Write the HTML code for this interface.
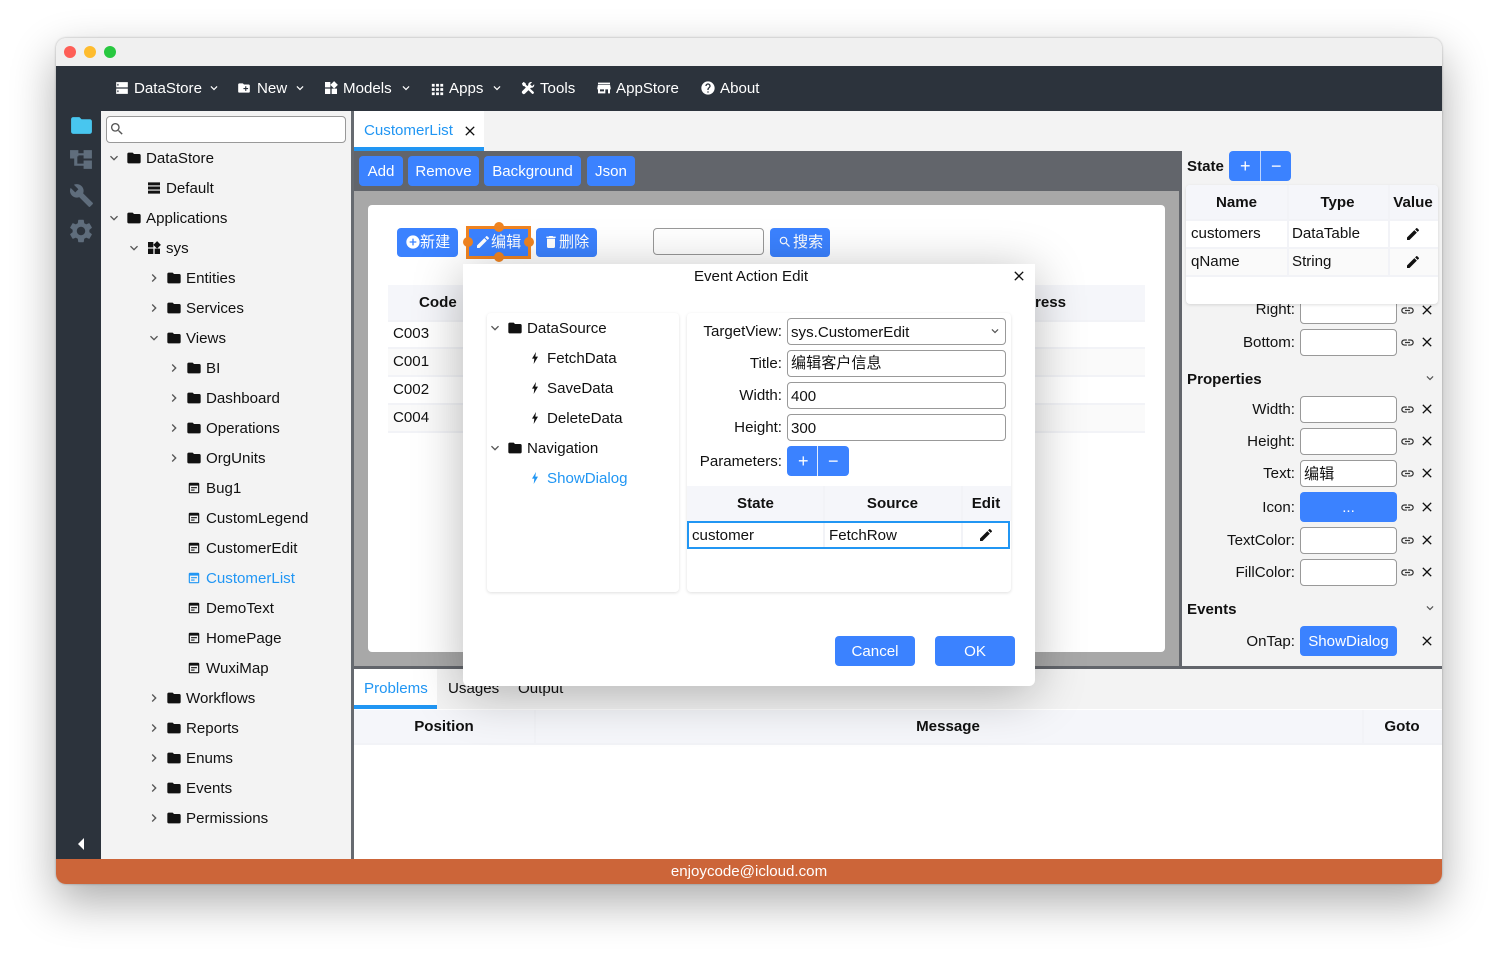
<!DOCTYPE html>
<html><head><meta charset="utf-8"><style>
*{box-sizing:border-box}
html,body{margin:0;padding:0;width:1498px;height:958px;overflow:hidden;background:#fff;font-family:"Liberation Sans","Noto Sans CJK SC",sans-serif;font-size:15.1px;color:#111}
div,span,svg{position:absolute}
.t{white-space:nowrap;line-height:20px;height:20px;margin-top:1px}
.r{white-space:nowrap;line-height:20px;height:20px;text-align:right;width:130px;margin-top:1px}
.c{white-space:nowrap;line-height:20px;height:20px;text-align:center;margin-top:1px}
.b{font-weight:bold}
.w{color:#fff}
.bl{color:#2196f3}
svg{fill:currentColor;overflow:visible}
.i16{width:16px;height:16px}
.i14{width:14px;height:14px}
.lk{width:15px;height:15px;margin:-.5px;color:#333}
.xx{width:16px;height:16px;margin:-1px}
.g{color:#555}
.btn{background:#3b82ff;border-radius:4px;color:#fff;text-align:center;line-height:30px;height:30px;white-space:nowrap;padding-top:1px}
.in{background:#fff;border:1px solid #999;border-radius:4px;height:27px;line-height:25px;padding-left:3px;padding-top:1px;white-space:nowrap}
.card{background:#fff;border-radius:4px;box-shadow:0 1px 3px rgba(0,0,0,.13)}
.hd{background:#f5f6fa}
.ln{background:#f2f3f7}
</style></head><body>
<svg width="0" height="0" style="position:absolute"><defs>
<symbol id="folder" viewBox="0 0 24 24"><path d="M10 4H4c-1.1 0-2 .9-2 2v12c0 1.1.9 2 2 2h16c1.1 0 2-.9 2-2V8c0-1.1-.9-2-2-2h-8z"/></symbol>
<symbol id="down" viewBox="0 0 24 24"><path d="M16.59 8.59L12 13.17 7.41 8.59 6 10l6 6 6-6z"/></symbol>
<symbol id="right" viewBox="0 0 24 24"><path d="M10 6L8.59 7.41 13.17 12l-4.58 4.59L10 18l6-6z"/></symbol>
<symbol id="server" viewBox="0 0 24 24"><path fill-rule="evenodd" d="M2 22h20V13H2zM4 16h2v3H4zM2 2v9h20V2zM4 5h2v3H4z"/></symbol>
<symbol id="newf" viewBox="0 0 24 24"><path d="M20 6h-8l-2-2H4c-1.11 0-1.99.89-1.99 2L2 18c0 1.11.89 2 2 2h16c1.11 0 2-.89 2-2V8c0-1.11-.89-2-2-2zm-1 8h-3v3h-2v-3h-3v-2h3V9h2v3h3v2z"/></symbol>
<symbol id="widgets" viewBox="0 0 24 24"><path d="M13 13v8h8v-8h-8zM3 21h8v-8H3v8zM3 3v8h8V3H3zm13.66-1.31L11 7.34 16.66 13l5.66-5.66-5.66-5.65z"/></symbol>
<symbol id="apps" viewBox="0 0 24 24"><path d="M4 8h4V4H4v4zm6 12h4v-4h-4v4zm-6 0h4v-4H4v4zm0-6h4v-4H4v4zm6 0h4v-4h-4v4zm6-10v4h4V4h-4zm-6 4h4V4h-4v4zm6 6h4v-4h-4v4zm0 6h4v-4h-4v4z"/></symbol>
<symbol id="wrench" viewBox="0 0 24 24"><path d="M22.7 19l-9.1-9.1c.9-2.3.4-5-1.5-6.9-2-2-5-2.4-7.4-1.3L9 6 6 9 1.6 4.7C.4 7.1.9 10.1 2.9 12.1c1.9 1.9 4.6 2.4 6.9 1.5l9.1 9.1c.4.4 1 .4 1.4 0l2.3-2.3c.5-.4.5-1.1.1-1.4z"/></symbol>
<symbol id="gear" viewBox="0 0 24 24"><path d="M19.14 12.94c.04-.3.06-.61.06-.94 0-.32-.02-.64-.07-.94l2.03-1.58c.18-.14.23-.41.12-.61l-1.92-3.32c-.12-.22-.37-.29-.59-.22l-2.39.96c-.5-.38-1.03-.7-1.62-.94l-.36-2.54c-.04-.24-.24-.41-.48-.41h-3.84c-.24 0-.43.17-.47.41l-.36 2.54c-.59.24-1.13.57-1.62.94l-2.39-.96c-.22-.08-.47 0-.59.22L2.74 8.87c-.12.21-.08.47.12.61l2.03 1.58c-.05.3-.09.63-.09.94s.02.64.07.94l-2.03 1.58c-.18.14-.23.41-.12.61l1.92 3.32c.12.22.37.29.59.22l2.39-.96c.5.38 1.03.7 1.62.94l.36 2.54c.05.24.24.41.48.41h3.84c.24 0 .44-.17.47-.41l.36-2.54c.59-.24 1.13-.56 1.62-.94l2.39.96c.22.08.47 0 .59-.22l1.92-3.32c.12-.22.07-.47-.12-.61l-2.01-1.58zM12 15.6c-1.98 0-3.6-1.62-3.6-3.6s1.62-3.6 3.6-3.6 3.6 1.62 3.6 3.6-1.62 3.6-3.6 3.6z"/></symbol>
<symbol id="tree" viewBox="0 0 24 24"><path d="M22 11V3h-8v3H9V3H1v8h4v7h9v3h8v-8h-8v3H8v-7h1V8h5v3z"/></symbol>
<symbol id="tools" viewBox="0 0 24 24"><path d="M1.500 4.500L4.500 1.500 8 4l.5 2.500L21.500 18.500c1 1 1 2 0 3s-2 1-3 0L6 9 3.500 8.500z"/><path d="M22.500 5.500L19 9 15.500 5.500 19 2c-3-1-7 1-6.500 5L2.500 17c-1.500 1.500-1.500 3 0 4.500s3 1.500 4.500 0L17 11.500c4 .5 6.500-3 5.500-6z"/></symbol>
<symbol id="store" viewBox="0 0 24 24"><path d="M21 4H3v2h18V4zm1 10v-2l-1-5H3l-1 5v2h1v6h11v-6h4v6h3v-6h1zm-10 3H6v-3h6v3z"/></symbol>
<symbol id="help" viewBox="0 0 24 24"><path d="M12 2C6.480 2 2 6.480 2 12s4.480 10 10 10 10-4.480 10-10S17.520 2 12 2zm1 17h-2v-2h2v2zm2.070-7.750l-.9.920C13.450 12.900 13 13.500 13 15h-2v-.5c0-1.100.45-2.100 1.170-2.830l1.240-1.260c.37-.36.59-.86.59-1.410 0-1.100-.9-2-2-2s-2 .9-2 2H8c0-2.210 1.790-4 4-4s4 1.790 4 4c0 .88-.36 1.680-.93 2.250z"/></symbol>
<symbol id="edit" viewBox="0 0 24 24"><path d="M3 17.250V21h3.750L17.810 9.940l-3.750-3.750L3 17.250zM20.710 7.040c.39-.39.39-1.020 0-1.410l-2.340-2.340c-.39-.39-1.020-.39-1.410 0l-1.830 1.830 3.750 3.750 1.830-1.830z"/></symbol>
<symbol id="del" viewBox="0 0 24 24"><path d="M6 19c0 1.100.9 2 2 2h8c1.100 0 2-.9 2-2V7H6v12zM19 4h-3.500l-1-1h-5l-1 1H5v2h14V4z"/></symbol>
<symbol id="addc" viewBox="0 0 24 24"><path d="M12 2C6.480 2 2 6.480 2 12s4.480 10 10 10 10-4.480 10-10S17.520 2 12 2zm5 11h-4v4h-2v-4H7v-2h4V7h2v4h4v2z"/></symbol>
<symbol id="search" viewBox="0 0 24 24"><path d="M15.500 14h-.79l-.28-.27C15.410 12.590 16 11.110 16 9.500 16 5.910 13.090 3 9.500 3S3 5.910 3 9.500 5.910 16 9.500 16c1.610 0 3.090-.59 4.230-1.570l.27.28v.79l5 4.990L20.490 19l-4.990-5zm-6 0C7.010 14 5 11.990 5 9.500S7.010 5 9.500 5 14 7.010 14 9.500 11.990 14 9.500 14z"/></symbol>
<symbol id="link" viewBox="0 0 24 24"><path d="M3.900 12c0-1.710 1.390-3.100 3.100-3.100h4V7H7c-2.760 0-5 2.240-5 5s2.240 5 5 5h4v-1.900H7c-1.710 0-3.100-1.390-3.100-3.100zM8 13h8v-2H8v2zm9-6h-4v1.900h4c1.710 0 3.100 1.390 3.100 3.100s-1.390 3.100-3.100 3.100h-4V17h4c2.760 0 5-2.240 5-5s-2.240-5-5-5z"/></symbol>
<symbol id="x" viewBox="0 0 24 24"><path d="M19 6.410L17.590 5 12 10.590 6.410 5 5 6.410 10.590 12 5 17.590 6.410 19 12 13.410 17.590 19 19 17.590 13.410 12z"/></symbol>
<symbol id="bolt" viewBox="0 0 24 24"><path d="M13.500 3L7.500 13h3.500l-1 8 6.500-11h-4z"/></symbol>
<symbol id="form" viewBox="0 0 24 24"><path d="M19 3H5c-1.110 0-2 .9-2 2v14c0 1.100.89 2 2 2h14c1.100 0 2-.9 2-2V5c0-1.100-.89-2-2-2zm0 16H5V8h14v11zM7 10.500h10v2H7zM7 14.500h6v2H7z"/></symbol>
<symbol id="list" viewBox="0 0 24 24"><path d="M3 3.500h18V8H3zM3 9.750h18v4.500H3zM3 16h18v4.500H3z"/></symbol>
</defs></svg>

<!-- window -->
<div style="left:56px;top:38px;width:1386px;height:846px;border-radius:10px;box-shadow:0 18px 45px rgba(0,0,0,.33),0 0 2px rgba(0,0,0,.3);background:#f3f3f3"></div>
<div style="left:56px;top:38px;width:1386px;height:28px;background:#f0f0f0;border-radius:10px 10px 0 0"></div>
<div style="left:64px;top:46px;width:12px;height:12px;border-radius:50%;background:#fe5f57"></div>
<div style="left:84px;top:46px;width:12px;height:12px;border-radius:50%;background:#febc2e"></div>
<div style="left:104px;top:46px;width:12px;height:12px;border-radius:50%;background:#28c840"></div>

<!-- top bar -->
<div style="left:56px;top:66px;width:1386px;height:45px;background:#2c333c"></div>
<div style="left:56px;top:111px;width:45px;height:748px;background:#2c333c"></div>
<svg class="i14 w" style="left:114.500px;top:81px"><use href="#server"/></svg><div class="t w" style="left:134px;top:78px">DataStore</div><svg class="i14 w" style="left:207px;top:81px"><use href="#down"/></svg>
<svg class="i14 w" style="left:237px;top:81px"><use href="#newf"/></svg><div class="t w" style="left:257px;top:78px">New</div><svg class="i14 w" style="left:293px;top:81px"><use href="#down"/></svg>
<svg class="i16 w" style="left:323px;top:80px"><use href="#widgets"/></svg><div class="t w" style="left:343px;top:78px">Models</div><svg class="i14 w" style="left:399px;top:81px"><use href="#down"/></svg>
<svg class="i16 w" style="left:428.500px;top:80.500px;width:17px;height:17px"><use href="#apps"/></svg><div class="t w" style="left:449px;top:78px">Apps</div><svg class="i14 w" style="left:490px;top:81px"><use href="#down"/></svg>
<svg class="i14 w" style="left:521px;top:81px"><use href="#tools"/></svg><div class="t w" style="left:540px;top:78px">Tools</div>
<svg class="i16 w" style="left:596px;top:80px"><use href="#store"/></svg><div class="t w" style="left:616px;top:78px">AppStore</div>
<svg class="i16 w" style="left:700px;top:80px"><use href="#help"/></svg><div class="t w" style="left:720px;top:78px">About</div>

<!-- side icons -->
<svg style="left:69px;top:113px;width:25px;height:25px;color:#48c6ef"><use href="#folder"/></svg>
<svg style="left:69px;top:147px;width:25px;height:25px;color:#5f6d7c"><use href="#tree"/></svg>
<svg style="left:69px;top:183px;width:25px;height:25px;color:#5f6d7c"><use href="#wrench"/></svg>
<svg style="left:67px;top:217px;width:28px;height:28px;color:#5f6d7c"><use href="#gear"/></svg>
<svg style="left:77px;top:838px;width:8px;height:12px;color:#fff" viewBox="0 0 8 12"><path d="M7 0v12L1 6z"/></svg>

<!-- tree -->
<div style="left:101px;top:111px;width:250px;height:748px;background:#f3f3f3"></div>
<div style="left:351px;top:111px;width:3px;height:748px;background:#666a70"></div>
<div style="left:106px;top:116px;width:240px;height:27px;background:#fff;border:1px solid #999;border-radius:4px"></div>
<svg class="i16" style="left:109px;top:121px;color:#555"><use href="#search"/></svg>

<svg class="i16 g" style="left:106px;top:150px"><use href="#down"/></svg><svg class="i16" style="left:126px;top:150px"><use href="#folder"/></svg><div class="t" style="left:146px;top:148px">DataStore</div>
<svg class="i16" style="left:146px;top:180px"><use href="#list"/></svg><div class="t" style="left:166px;top:178px">Default</div>
<svg class="i16 g" style="left:106px;top:210px"><use href="#down"/></svg><svg class="i16" style="left:126px;top:210px"><use href="#folder"/></svg><div class="t" style="left:146px;top:208px">Applications</div>
<svg class="i16 g" style="left:126px;top:240px"><use href="#down"/></svg><svg class="i16" style="left:146px;top:240px"><use href="#widgets"/></svg><div class="t" style="left:166px;top:238px">sys</div>
<svg class="i16 g" style="left:146px;top:270px"><use href="#right"/></svg><svg class="i16" style="left:166px;top:270px"><use href="#folder"/></svg><div class="t" style="left:186px;top:268px">Entities</div>
<svg class="i16 g" style="left:146px;top:300px"><use href="#right"/></svg><svg class="i16" style="left:166px;top:300px"><use href="#folder"/></svg><div class="t" style="left:186px;top:298px">Services</div>
<svg class="i16 g" style="left:146px;top:330px"><use href="#down"/></svg><svg class="i16" style="left:166px;top:330px"><use href="#folder"/></svg><div class="t" style="left:186px;top:328px">Views</div>
<svg class="i16 g" style="left:166px;top:360px"><use href="#right"/></svg><svg class="i16" style="left:186px;top:360px"><use href="#folder"/></svg><div class="t" style="left:206px;top:358px">BI</div>
<svg class="i16 g" style="left:166px;top:390px"><use href="#right"/></svg><svg class="i16" style="left:186px;top:390px"><use href="#folder"/></svg><div class="t" style="left:206px;top:388px">Dashboard</div>
<svg class="i16 g" style="left:166px;top:420px"><use href="#right"/></svg><svg class="i16" style="left:186px;top:420px"><use href="#folder"/></svg><div class="t" style="left:206px;top:418px">Operations</div>
<svg class="i16 g" style="left:166px;top:450px"><use href="#right"/></svg><svg class="i16" style="left:186px;top:450px"><use href="#folder"/></svg><div class="t" style="left:206px;top:448px">OrgUnits</div>
<svg class="i14" style="left:186.500px;top:481px"><use href="#form"/></svg><div class="t" style="left:206px;top:478px">Bug1</div>
<svg class="i14" style="left:186.500px;top:511px"><use href="#form"/></svg><div class="t" style="left:206px;top:508px">CustomLegend</div>
<svg class="i14" style="left:186.500px;top:541px"><use href="#form"/></svg><div class="t" style="left:206px;top:538px">CustomerEdit</div>
<svg class="i14 bl" style="left:186.500px;top:571px"><use href="#form"/></svg><div class="t bl" style="left:206px;top:568px">CustomerList</div>
<svg class="i14" style="left:186.500px;top:601px"><use href="#form"/></svg><div class="t" style="left:206px;top:598px">DemoText</div>
<svg class="i14" style="left:186.500px;top:631px"><use href="#form"/></svg><div class="t" style="left:206px;top:628px">HomePage</div>
<svg class="i14" style="left:186.500px;top:661px"><use href="#form"/></svg><div class="t" style="left:206px;top:658px">WuxiMap</div>
<svg class="i16 g" style="left:146px;top:690px"><use href="#right"/></svg><svg class="i16" style="left:166px;top:690px"><use href="#folder"/></svg><div class="t" style="left:186px;top:688px">Workflows</div>
<svg class="i16 g" style="left:146px;top:720px"><use href="#right"/></svg><svg class="i16" style="left:166px;top:720px"><use href="#folder"/></svg><div class="t" style="left:186px;top:718px">Reports</div>
<svg class="i16 g" style="left:146px;top:750px"><use href="#right"/></svg><svg class="i16" style="left:166px;top:750px"><use href="#folder"/></svg><div class="t" style="left:186px;top:748px">Enums</div>
<svg class="i16 g" style="left:146px;top:780px"><use href="#right"/></svg><svg class="i16" style="left:166px;top:780px"><use href="#folder"/></svg><div class="t" style="left:186px;top:778px">Events</div>
<svg class="i16 g" style="left:146px;top:810px"><use href="#right"/></svg><svg class="i16" style="left:166px;top:810px"><use href="#folder"/></svg><div class="t" style="left:186px;top:808px">Permissions</div>

<!-- tabs -->
<div style="left:354px;top:111px;width:1088px;height:40px;background:#f3f3f3"></div>
<div style="left:354px;top:111px;width:130px;height:40px;background:#fff;border-bottom:4px solid #2196f3"></div>
<div class="t bl" style="left:364px;top:120px">CustomerList</div>
<svg class="xx" style="left:462.500px;top:124px"><use href="#x"/></svg>

<!-- toolbar + design -->
<div style="left:354px;top:151px;width:828px;height:40px;background:#62656b"></div>
<div class="btn" style="left:359px;top:156px;width:44px">Add</div>
<div class="btn" style="left:408px;top:156px;width:71px">Remove</div>
<div class="btn" style="left:484px;top:156px;width:97px">Background</div>
<div class="btn" style="left:587px;top:156px;width:48px">Json</div>
<div style="left:354px;top:191px;width:825px;height:475px;background:#a8a8a8"></div>
<div style="left:368px;top:205px;width:797px;height:447px;background:#fff;border-radius:4px"></div>
<div class="btn" style="left:397px;top:228px;width:61px;height:29px;line-height:28px;padding-left:23px;text-align:left">新建</div>
<svg class="i16 w" style="left:404.500px;top:234px"><use href="#addc"/></svg>
<div class="btn" style="left:536px;top:228px;width:61px;height:29px;line-height:28px;padding-left:23px;text-align:left">删除</div>
<svg class="i16 w" style="left:543px;top:234px"><use href="#del"/></svg>
<div class="btn" style="left:466px;top:226px;width:65px;height:33px;line-height:26px;border:3px solid #f08421;border-radius:0;padding-left:22px;text-align:left">编辑</div>
<svg class="i16 w" style="left:475px;top:234px"><use href="#edit"/></svg>
<div style="left:494px;top:222px;width:10px;height:10px;border-radius:50%;background:#f08421"></div>
<div style="left:494px;top:252px;width:10px;height:10px;border-radius:50%;background:#f08421"></div>
<div style="left:463px;top:237px;width:10px;height:10px;border-radius:50%;background:#f08421"></div>
<div style="left:524px;top:237px;width:10px;height:10px;border-radius:50%;background:#f08421"></div>
<div class="in" style="left:653px;top:228px;width:111px"></div>
<div class="btn" style="left:770px;top:228px;width:60px;height:29px;line-height:28px;padding-left:23px;text-align:left">搜索</div>
<svg class="i14 w" style="left:778px;top:235px"><use href="#search"/></svg>
<!-- design table -->
<div class="hd" style="left:388px;top:285px;width:757px;height:35px"></div>
<div class="t b" style="left:419px;top:292px">Code</div>
<div class="t b" style="left:1035px;top:292px">ress</div>
<div class="ln" style="left:388px;top:320px;width:757px;height:2px"></div>
<div style="left:388px;top:348px;width:757px;height:28px;background:#fafafa"></div>
<div style="left:388px;top:404px;width:757px;height:28px;background:#fafafa"></div>
<div class="ln" style="left:388px;top:347px;width:757px;height:2px"></div>
<div class="ln" style="left:388px;top:375px;width:757px;height:2px"></div>
<div class="ln" style="left:388px;top:403px;width:757px;height:2px"></div>
<div class="ln" style="left:388px;top:431px;width:757px;height:2px"></div>
<div class="t" style="left:393px;top:323px">C003</div>
<div class="t" style="left:393px;top:351px">C001</div>
<div class="t" style="left:393px;top:379px">C002</div>
<div class="t" style="left:393px;top:407px">C004</div>

<!-- right panel -->
<div style="left:1179px;top:151px;width:3px;height:515px;background:#62656b"></div>
<div style="left:1182px;top:151px;width:260px;height:515px;background:#f3f3f3"></div>
<div class="t b" style="left:1187px;top:156px">State</div>
<div class="btn" style="left:1229px;top:151px;width:62px"></div>
<div style="left:1260px;top:151px;width:1px;height:30px;background:#bcd4ff"></div>
<div class="t w" style="left:1240px;top:155px;font-size:18px">+</div>
<div class="t w" style="left:1271px;top:155px;font-size:18px">−</div>
<div class="r" style="left:1165px;top:299px">Right:</div>
<div class="in" style="left:1300px;top:297px;width:97px"></div>
<div class="r" style="left:1165px;top:332px">Bottom:</div><div class="in" style="left:1300px;top:329px;width:97px"></div>
<div class="t b" style="left:1187px;top:369px">Properties</div><svg class="i14 g" style="left:1423px;top:371px"><use href="#down"/></svg>
<div class="r" style="left:1165px;top:399px">Width:</div><div class="in" style="left:1300px;top:396px;width:97px"></div>
<div class="r" style="left:1165px;top:431px">Height:</div><div class="in" style="left:1300px;top:428px;width:97px"></div>
<div class="r" style="left:1165px;top:463px">Text:</div><div class="in" style="left:1300px;top:460px;width:97px">编辑</div>
<div class="r" style="left:1165px;top:497px">Icon:</div><div class="btn" style="left:1300px;top:492px;width:97px">...</div>
<div class="r" style="left:1165px;top:530px">TextColor:</div><div class="in" style="left:1300px;top:527px;width:97px"></div>
<div class="r" style="left:1165px;top:562px">FillColor:</div><div class="in" style="left:1300px;top:559px;width:97px"></div>
<div class="t b" style="left:1187px;top:599px">Events</div><svg class="i14 g" style="left:1423px;top:601px"><use href="#down"/></svg>
<div class="r" style="left:1165px;top:631px">OnTap:</div><div class="btn" style="left:1300px;top:626px;width:97px">ShowDialog</div>
<svg class="lk" style="left:1400px;top:303px"><use href="#link"/></svg><svg class="xx" style="left:1420px;top:303px"><use href="#x"/></svg>
<svg class="lk" style="left:1400px;top:335px"><use href="#link"/></svg><svg class="xx" style="left:1420px;top:335px"><use href="#x"/></svg>
<svg class="lk" style="left:1400px;top:402px"><use href="#link"/></svg><svg class="xx" style="left:1420px;top:402px"><use href="#x"/></svg>
<svg class="lk" style="left:1400px;top:434px"><use href="#link"/></svg><svg class="xx" style="left:1420px;top:434px"><use href="#x"/></svg>
<svg class="lk" style="left:1400px;top:466px"><use href="#link"/></svg><svg class="xx" style="left:1420px;top:466px"><use href="#x"/></svg>
<svg class="lk" style="left:1400px;top:500px"><use href="#link"/></svg><svg class="xx" style="left:1420px;top:500px"><use href="#x"/></svg>
<svg class="lk" style="left:1400px;top:533px"><use href="#link"/></svg><svg class="xx" style="left:1420px;top:533px"><use href="#x"/></svg>
<svg class="lk" style="left:1400px;top:565px"><use href="#link"/></svg><svg class="xx" style="left:1420px;top:565px"><use href="#x"/></svg>
<svg class="xx" style="left:1420px;top:634px"><use href="#x"/></svg>
<!-- state card -->
<div class="card" style="left:1186px;top:185px;width:252px;height:119px"></div>
<div class="hd" style="left:1186px;top:185px;width:252px;height:34px;border-radius:4px 4px 0 0"></div>
<div style="left:1186px;top:248px;width:252px;height:28px;background:#fafafa"></div>
<div class="ln" style="left:1186px;top:219px;width:252px;height:2px"></div>
<div class="ln" style="left:1186px;top:247px;width:252px;height:2px"></div>
<div class="ln" style="left:1186px;top:275px;width:252px;height:2px"></div>
<div class="ln" style="left:1287px;top:185px;width:2px;height:91px"></div>
<div class="ln" style="left:1388px;top:185px;width:2px;height:91px"></div>
<div class="c b" style="left:1186px;top:192px;width:101px">Name</div>
<div class="c b" style="left:1287px;top:192px;width:101px">Type</div>
<div class="c b" style="left:1388px;top:192px;width:50px">Value</div>
<div class="t" style="left:1191px;top:223px">customers</div><div class="t" style="left:1292px;top:223px">DataTable</div>
<div class="t" style="left:1191px;top:251px">qName</div><div class="t" style="left:1292px;top:251px">String</div>
<svg class="i16" style="left:1405px;top:226px"><use href="#edit"/></svg>
<svg class="i16" style="left:1405px;top:254px"><use href="#edit"/></svg>

<!-- h splitter + bottom -->
<div style="left:354px;top:666px;width:1088px;height:3px;background:#62656b"></div>
<div style="left:354px;top:669px;width:1088px;height:190px;background:#fff"></div>
<div style="left:354px;top:669px;width:1088px;height:40px;background:#f3f3f3"></div>
<div style="left:354px;top:669px;width:83px;height:40px;background:#fff;border-bottom:4px solid #2196f3"></div>
<div class="t bl" style="left:364px;top:678px">Problems</div>
<div class="t" style="left:448px;top:678px">Usages</div>
<div class="t" style="left:518px;top:678px">Output</div>
<div class="hd" style="left:354px;top:710px;width:1088px;height:34px"></div>
<div class="ln" style="left:354px;top:743px;width:1088px;height:2px"></div>
<div class="ln" style="left:534px;top:710px;width:2px;height:34px"></div>
<div class="ln" style="left:1362px;top:710px;width:2px;height:34px"></div>
<div class="c b" style="left:354px;top:716px;width:180px">Position</div>
<div class="c b" style="left:534px;top:716px;width:828px">Message</div>
<div class="c b" style="left:1362px;top:716px;width:80px">Goto</div>

<!-- footer -->
<div class="c w" style="left:56px;top:859px;width:1386px;height:25px;line-height:25px;margin-top:0;background:#cc6539;border-radius:0 0 10px 10px">enjoycode@icloud.com</div>

<!-- modal -->
<div style="left:463px;top:264px;width:572px;height:422px;background:#fff;border-radius:0 0 6px 6px;box-shadow:0 8px 50px rgba(0,0,0,.28)"></div>
<div class="c" style="left:463px;top:266px;width:576px">Event Action Edit</div>
<svg class="xx" style="left:1012px;top:269px"><use href="#x"/></svg>
<div class="card" style="left:487px;top:313px;width:192px;height:279px"></div>
<svg class="i16 g" style="left:487px;top:320px"><use href="#down"/></svg><svg class="i16" style="left:507px;top:320px"><use href="#folder"/></svg><div class="t" style="left:527px;top:318px">DataSource</div>
<svg class="i16" style="left:527px;top:350px"><use href="#bolt"/></svg><div class="t" style="left:547px;top:348px">FetchData</div>
<svg class="i16" style="left:527px;top:380px"><use href="#bolt"/></svg><div class="t" style="left:547px;top:378px">SaveData</div>
<svg class="i16" style="left:527px;top:410px"><use href="#bolt"/></svg><div class="t" style="left:547px;top:408px">DeleteData</div>
<svg class="i16 g" style="left:487px;top:440px"><use href="#down"/></svg><svg class="i16" style="left:507px;top:440px"><use href="#folder"/></svg><div class="t" style="left:527px;top:438px">Navigation</div>
<svg class="i16 bl" style="left:527px;top:470px"><use href="#bolt"/></svg><div class="t bl" style="left:547px;top:468px">ShowDialog</div>

<div class="card" style="left:687px;top:313px;width:324px;height:279px"></div>
<div class="r" style="left:652px;top:321px">TargetView:</div><div class="in" style="left:787px;top:318px;width:219px">sys.CustomerEdit</div><svg class="i14 g" style="left:988px;top:324px"><use href="#down"/></svg>
<div class="r" style="left:652px;top:353px">Title:</div><div class="in" style="left:787px;top:350px;width:219px;padding-top:0">编辑客户信息</div>
<div class="r" style="left:652px;top:385px">Width:</div><div class="in" style="left:787px;top:382px;width:219px">400</div>
<div class="r" style="left:652px;top:417px">Height:</div><div class="in" style="left:787px;top:414px;width:219px">300</div>
<div class="r" style="left:652px;top:451px">Parameters:</div>
<div class="btn" style="left:787px;top:446px;width:62px"></div>
<div style="left:817px;top:446px;width:1px;height:30px;background:#e4eeff"></div>
<div class="t w" style="left:798px;top:450px;font-size:18px">+</div>
<div class="t w" style="left:828px;top:450px;font-size:18px">−</div>
<div class="hd" style="left:687px;top:486px;width:324px;height:35px"></div>
<div class="ln" style="left:823px;top:486px;width:2px;height:62px"></div>
<div class="ln" style="left:961px;top:486px;width:2px;height:62px"></div>
<div class="c b" style="left:687px;top:493px;width:137px">State</div>
<div class="c b" style="left:824px;top:493px;width:137px">Source</div>
<div class="c b" style="left:961px;top:493px;width:50px">Edit</div>
<div style="left:687px;top:521px;width:323px;height:28px;border:2px solid #2196f3"></div>
<div class="t" style="left:692px;top:525px">customer</div>
<div class="t" style="left:829px;top:525px">FetchRow</div>
<svg class="i16" style="left:978px;top:527px"><use href="#edit"/></svg>
<div class="btn" style="left:835px;top:636px;width:80px">Cancel</div>
<div class="btn" style="left:935px;top:636px;width:80px">OK</div>
</body></html>
